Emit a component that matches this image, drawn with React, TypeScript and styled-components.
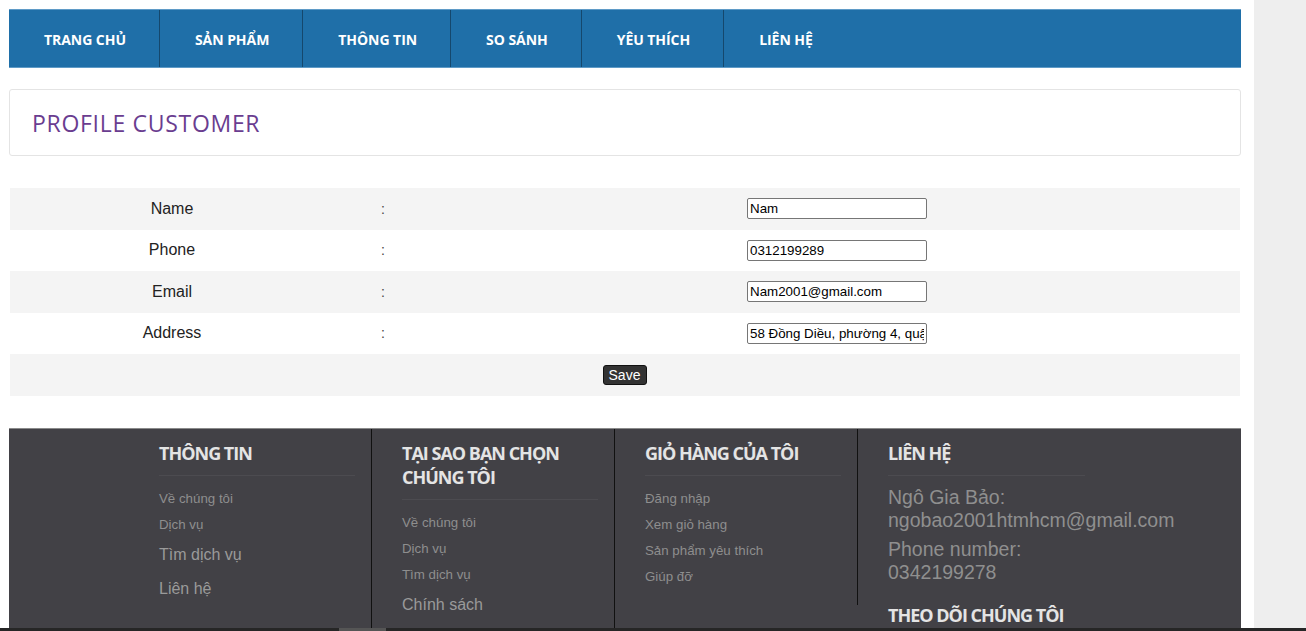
import React from "react";
import styled, { createGlobalStyle } from "styled-components";

const GlobalStyle = createGlobalStyle`
  html, body { margin: 0; padding: 0; }
  body {
    background: #eeeeee;
    overflow: hidden;
    font-family: "Liberation Sans", Arial, sans-serif;
  }
`;

const Wrapper = styled.div`
  width: 1254px;
  box-sizing: border-box;
  background: #ffffff;
  padding: 9px 13px 0 9px;
  min-height: 700px;
`;

const Nav = styled.nav`
  display: flex;
  height: 59px;
  background: #1f6fa8;
  border-top: 1px solid #5f9bc7;
  border-bottom: 1px solid #5f9bc7;
  box-sizing: border-box;
`;

const NavItem = styled.a<{ $last?: boolean }>`
  display: flex;
  align-items: center;
  padding: 1px 33px 0 35px;
  color: #ffffff;
  font-family: "Open Sans", sans-serif;
  font-weight: 700;
  font-size: 14px;
  letter-spacing: -0.05px;
  text-transform: uppercase;
  text-decoration: none;
  border-right: ${(p) => (p.$last ? "none" : "1px solid #15486d")};
`;

const TitleBox = styled.div`
  margin-top: 21px;
  height: 67px;
  box-sizing: border-box;
  border: 1px solid #e4e4e4;
  border-radius: 3px;
  display: flex;
  align-items: center;
  padding: 0 22px;
`;

const Title = styled.h2`
  margin: 0;
  font-family: "Open Sans", sans-serif;
  font-weight: 400;
  font-size: 23px;
  letter-spacing: 0.7px;
  color: #6a3d90;
`;

const Table = styled.div`
  margin: 32px 1px 0 1px;
  display: flex;
  flex-direction: column;
`;

const Row = styled.div<{ $odd: boolean }>`
  display: grid;
  grid-template-columns: 324px 413px 1fr;
  align-items: center;
  height: 41.5px;
  background: ${(p) => (p.$odd ? "#f4f4f4" : "#ffffff")};
`;

const Label = styled.div`
  text-align: center;
  font-size: 16px;
  color: #222222;
`;

const Colon = styled.div`
  padding-left: 47px;
  font-size: 14px;
  color: #444444;
`;

const Field = styled.input`
  width: 180px;
  height: 21px;
  box-sizing: border-box;
  border: 1px solid #767676;
  border-radius: 2px;
  padding: 0 2px;
  font-family: "Liberation Sans", Arial, sans-serif;
  font-size: 13.33px;
  color: #000;
  background: #fff;
`;

const SaveRow = styled.div`
  display: flex;
  justify-content: center;
  align-items: center;
  height: 41.5px;
  background: #f4f4f4;
`;

const SaveButton = styled.button`
  width: 44px;
  height: 20px;
  padding: 0;
  margin-left: -1px;
  border: 1px solid #111;
  border-radius: 3px;
  background: #333333;
  color: #ffffff;
  font-family: "Liberation Sans", Arial, sans-serif;
  font-size: 14px;
`;

const Footer = styled.footer`
  margin-top: 32px;
  height: 260px;
  background: #424146;
  border-top: 1px solid #8a8a8a;
  box-sizing: border-box;
  display: flex;
  align-items: stretch;
  padding-left: 120px;
`;

const FCol = styled.div<{ $border?: boolean; $short?: boolean }>`
  padding: 12px 16px 15px 30px;
  box-sizing: border-box;
  width: 243px;
  border-right: ${(p) => (p.$border ? "1px solid #111" : "none")};
  align-self: ${(p) => (p.$short ? "flex-start" : "stretch")};
`;

const FHead = styled.h3<{ $noline?: boolean; $wrap?: boolean }>`
  margin: 0 0 ${(p) => (p.$noline ? "0" : "10px")} 0;
  padding-bottom: ${(p) => (p.$noline ? "0" : "10px")};
  border-bottom: ${(p) => (p.$noline ? "none" : "1px solid #4c4b50")};
  font-family: "Open Sans", sans-serif;
  font-weight: 700;
  font-size: 18px;
  line-height: 24px;
  letter-spacing: -1px;
  color: #e4e4e4;
  text-transform: uppercase;
  white-space: ${(p) => (p.$wrap ? "normal" : "nowrap")};
`;

const FLinks = styled.ul`
  list-style: none;
  margin: 0;
  padding: 0;
`;

const FLink = styled.li<{ $big?: boolean }>`
  font-size: ${(p) => (p.$big ? "16px" : "13.3px")};
  line-height: ${(p) => (p.$big ? "34px" : "26px")};
  color: ${(p) => (p.$big ? "#9a9a9a" : "#8e8e8e")};
  white-space: nowrap;
`;

const FText = styled.p`
  margin: 0 0 6px 0;
  font-size: 19.5px;
  line-height: 23px;
  color: #8f8f8f;
  white-space: pre-line;
`;

const ContactBlock = styled.div`
  margin-top: 2px;
`;

const Follow = styled.div`
  margin-top: 19px;
`;

const BottomBar = styled.div`
  position: fixed;
  left: 0;
  right: 0;
  bottom: 0;
  height: 3px;
  background: #262626;
`;

const Thumb = styled.div`
  position: absolute;
  left: 339px;
  width: 47px;
  top: 0;
  bottom: 0;
  background: #555555;
`;

const navItems = ["Trang chủ", "Sản phẩm", "Thông tin", "So sánh", "Yêu thích", "Liên hệ"];

const fields = [
  { label: "Name", value: "Nam" },
  { label: "Phone", value: "0312199289" },
  { label: "Email", value: "Nam2001@gmail.com" },
  { label: "Address", value: "58 Đồng Diều, phường 4, quận 8" },
];

export default function App() {
  return (
    <>
      <GlobalStyle />
      <Wrapper>
        <Nav>
          {navItems.map((n, i) => (
            <NavItem key={n} href="#" $last={i === navItems.length - 1}>
              {n.toUpperCase()}
            </NavItem>
          ))}
        </Nav>

        <TitleBox>
          <Title>PROFILE CUSTOMER</Title>
        </TitleBox>

        <Table>
          {fields.map((f, i) => (
            <Row key={f.label} $odd={i % 2 === 0}>
              <Label>{f.label}</Label>
              <Colon>:</Colon>
              <div>
                <Field defaultValue={f.value} />
              </div>
            </Row>
          ))}
          <SaveRow>
            <SaveButton>Save</SaveButton>
          </SaveRow>
        </Table>

        <Footer>
          <FCol $border>
            <FHead>Thông tin</FHead>
            <FLinks>
              <FLink>Về chúng tôi</FLink>
              <FLink>Dịch vụ</FLink>
              <FLink $big>Tìm dịch vụ</FLink>
              <FLink $big>Liên hệ</FLink>
            </FLinks>
          </FCol>
          <FCol $border>
            <FHead $wrap>Tại sao bạn chọn chúng tôi</FHead>
            <FLinks>
              <FLink>Về chúng tôi</FLink>
              <FLink>Dịch vụ</FLink>
              <FLink>Tìm dịch vụ</FLink>
              <FLink $big>Chính sách</FLink>
            </FLinks>
          </FCol>
          <FCol $border $short>
            <FHead>Giỏ hàng của tôi</FHead>
            <FLinks>
              <FLink>Đăng nhập</FLink>
              <FLink>Xem giỏ hàng</FLink>
              <FLink>Sản phẩm yêu thích</FLink>
              <FLink>Giúp đỡ</FLink>
            </FLinks>
          </FCol>
          <FCol>
            <FHead>Liên hệ</FHead>
            <ContactBlock>
              <FText>{"Ngô Gia Bảo:\nngobao2001htmhcm@gmail.com"}</FText>
              <FText>{"Phone number:\n0342199278"}</FText>
            </ContactBlock>
            <Follow>
              <FHead $noline>Theo dõi chúng tôi</FHead>
            </Follow>
          </FCol>
        </Footer>
      </Wrapper>
      <BottomBar>
        <Thumb />
      </BottomBar>
    </>
  );
}
